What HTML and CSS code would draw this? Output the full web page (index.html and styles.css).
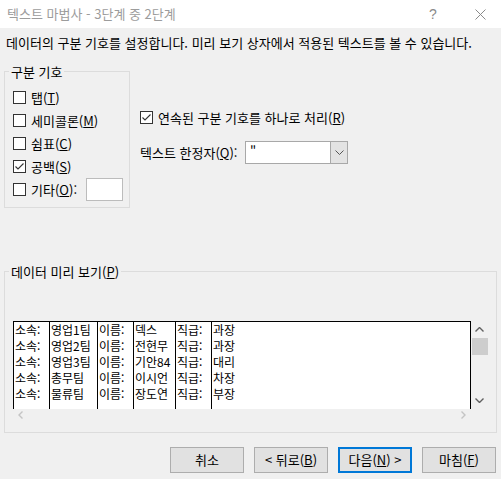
FILE: index.html
```html
<!DOCTYPE html>
<html lang="ko">
<head>
<meta charset="utf-8">
<title>텍스트 마법사</title>
<link rel="stylesheet" href="styles.css">
</head>
<body>
<div class="titlebar">
  <span class="title">텍스트 마법사 - 3단계 중 2단계</span>
  <span class="help">?</span>
  <svg class="close" width="11" height="11" viewBox="0 0 11 11"><path d="M0.5 0.5L10.5 10.5M10.5 0.5L0.5 10.5" stroke="#8a8a8a" stroke-width="1" fill="none"/></svg>
</div>
<p class="instr">데이터의 구분 기호를 설정합니다. 미리 보기 상자에서 적용된 텍스트를 볼 수 있습니다.</p>
<div class="main">
  <section class="group delims">
    <div class="legend">구분 기호</div>
    <div class="crow"><span class="cb"></span><span class="lbl">탭(<u>T</u>)</span></div>
    <div class="crow"><span class="cb"></span><span class="lbl">세미콜론(<u>M</u>)</span></div>
    <div class="crow"><span class="cb"></span><span class="lbl">쉼표(<u>C</u>)</span></div>
    <div class="crow"><span class="cb checked"><svg width="11" height="11" viewBox="0 0 11 11"><path d="M1.5 5.5L4 8L9.5 2.5" stroke="#333" stroke-width="1.1" fill="none"/></svg></span><span class="lbl">공백(<u>S</u>)</span></div>
    <div class="crow"><span class="cb"></span><span class="lbl other">기타(<u>O</u>):</span><span class="textbox"></span></div>
  </section>
  <div class="options">
    <div class="crow"><span class="cb checked"><svg width="11" height="11" viewBox="0 0 11 11"><path d="M1.5 5.5L4 8L9.5 2.5" stroke="#333" stroke-width="1.1" fill="none"/></svg></span><span class="lbl">연속된 구분 기호를 하나로 처리(<u>R</u>)</span></div>
    <div class="qrow">
      <span class="qlbl">텍스트 한정자(<u>Q</u>):</span>
      <div class="combo"><span class="val">"</span><span class="drop"><svg width="9" height="5" viewBox="0 0 9 5"><path d="M0.5 0.5L4.5 4.5L8.5 0.5" stroke="#555" stroke-width="1" fill="none"/></svg></span></div>
    </div>
  </div>
</div>
<section class="group preview">
  <div class="legend">데이터 미리 보기(<u>P</u>)</div>
  <div class="pv">
    <div class="table">
      <div class="col w1">소속:<br>소속:<br>소속:<br>소속:<br>소속:</div>
      <div class="col w2">영업1팀<br>영업2팀<br>영업3팀<br>총무팀<br>물류팀</div>
      <div class="col w3">이름:<br>이름:<br>이름:<br>이름:<br>이름:</div>
      <div class="col w4">덱스<br>전현무<br>기안84<br>이시언<br>장도연</div>
      <div class="col w5">직급:<br>직급:<br>직급:<br>직급:<br>직급:</div>
      <div class="col w6">과장<br>과장<br>대리<br>차장<br>부장</div>
    </div>
    <div class="vscroll">
      <svg width="9" height="5" viewBox="0 0 9 5"><path d="M0.5 4.5L4.5 0.5L8.5 4.5" stroke="#606060" stroke-width="1.4" fill="none"/></svg>
      <span class="thumb"></span>
      <span class="vspace"></span>
      <svg width="9" height="5" viewBox="0 0 9 5"><path d="M0.5 0.5L4.5 4.5L8.5 0.5" stroke="#606060" stroke-width="1.4" fill="none"/></svg>
    </div>
    <div class="hscroll">
      <svg width="5" height="8" viewBox="0 0 5 8"><path d="M4.5 0.5L1 4L4.5 7.5" stroke="#c4c4c4" stroke-width="1.4" fill="none"/></svg>
      <svg width="5" height="8" viewBox="0 0 5 8"><path d="M0.5 0.5L4 4L0.5 7.5" stroke="#c4c4c4" stroke-width="1.4" fill="none"/></svg>
    </div>
  </div>
</section>
<div class="buttons">
  <button class="btn">취소</button>
  <button class="btn">&lt; 뒤로(<u>B</u>)</button>
  <button class="btn default">다음(<u>N</u>) &gt;</button>
  <button class="btn">마침(<u>F</u>)</button>
</div>
</body>
</html>
```
FILE: styles.css
```css
* { box-sizing: border-box; }
html, body {
  margin: 0;
  padding: 0;
  width: 501px;
  height: 479px;
  overflow: hidden;
}
body {
  background: #f0f0f0;
  font-family: "Noto Sans CJK KR", "Noto Sans", sans-serif;
  font-size: 13px;
  line-height: 16px;
  color: #000;
}
u { text-decoration: underline; text-underline-offset: 1px; }

.titlebar {
  height: 28px;
  background: #fff;
  display: flex;
  align-items: center;
  padding-left: 7px;
}
.title { color: #9c9c9c; }
.help {
  margin-left: auto;
  width: 12px;
  text-align: center;
  color: #8a8a8a;
  font-family: "Liberation Sans", sans-serif;
  font-size: 14px;
}
.close { margin-left: 36px; margin-right: 15px; }

.instr {
  margin: 0;
  padding: 7px 6px 0;
}

.main {
  display: flex;
  align-items: flex-start;
  margin-top: 20px;
}

.group {
  border: 1px solid #dcdcdc;
  margin-left: 4px;
}
.legend {
  margin-top: -8px;
  margin-left: 4px;
  padding: 0 2px;
  background: #f0f0f0;
  width: fit-content;
  line-height: 16px;
}

.delims {
  width: 126px;
  height: 137px;
}
.delims .legend { margin-bottom: 6px; }
.crow {
  display: flex;
  align-items: center;
  height: 23px;
  padding-left: 8px;
}
.cb {
  width: 13px;
  height: 13px;
  border: 1px solid #333;
  background: #fff;
  flex: none;
  display: flex;
  align-items: center;
  justify-content: center;
}
.lbl { margin-left: 5px; white-space: nowrap; }
.lbl.other { width: 55px; }
.textbox {
  width: 37px;
  height: 23px;
  background: #fff;
  border: 1px solid #bcbcbc;
  flex: none;
}

.options {
  margin-left: 2px;
  padding-top: 35px;
}
.qrow {
  display: flex;
  align-items: center;
  margin-top: 12px;
  padding-left: 8px;
}
.qlbl { width: 105px; white-space: nowrap; }
.combo {
  width: 103px;
  height: 23px;
  border: 1px solid #a8a8a8;
  background: #fff;
  display: flex;
}
.val { flex: 1; padding-left: 4px; line-height: 20px; }
.drop {
  width: 17px;
  background: #e3e3e3;
  border-left: 1px solid #a8a8a8;
  display: flex;
  align-items: center;
  justify-content: center;
}

.preview {
  margin-top: 63px;
  width: 493px;
  height: 162px;
}
.pv {
  margin-top: 41px;
  margin-left: 8px;
  display: grid;
  grid-template-columns: 458px 17px;
  grid-template-rows: 88px 12px;
}
.table {
  border: 1px solid #000;
  border-bottom: none;
  background: #fff;
  display: flex;
  overflow: hidden;
  font-size: 12px;
}
.col {
  border-right: 1px solid #000;
  padding-left: 1px;
  white-space: nowrap;
  line-height: 16px;
}
.w1 { width: 36px; }
.w2 { width: 48px; }
.w3 { width: 36px; }
.w4 { width: 42px; }
.w5 { width: 36px; }
.w6 { flex: 1; border-right: none; }

.vscroll {
  display: flex;
  flex-direction: column;
  align-items: center;
  padding-top: 6px;
  padding-bottom: 6px;
}
.thumb {
  width: 16px;
  height: 17px;
  background: #cdcdcd;
  margin-top: 6px;
  margin-left: 1px;
}
.vspace { flex: 1; }
.hscroll {
  display: flex;
  justify-content: space-between;
  align-items: center;
  padding: 0 5px 0 5px;
}

.buttons {
  display: flex;
  justify-content: flex-end;
  gap: 10px;
  margin-top: 14px;
  padding-right: 5px;
}
.btn {
  width: 74px;
  height: 26px;
  background: #e1e1e1;
  border: 1px solid #adadad;
  font-family: inherit;
  font-size: 13px;
  color: #000;
  padding: 0;
  line-height: 16px;
}
.btn.default {
  border: 2px solid #0078d7;
}
```
